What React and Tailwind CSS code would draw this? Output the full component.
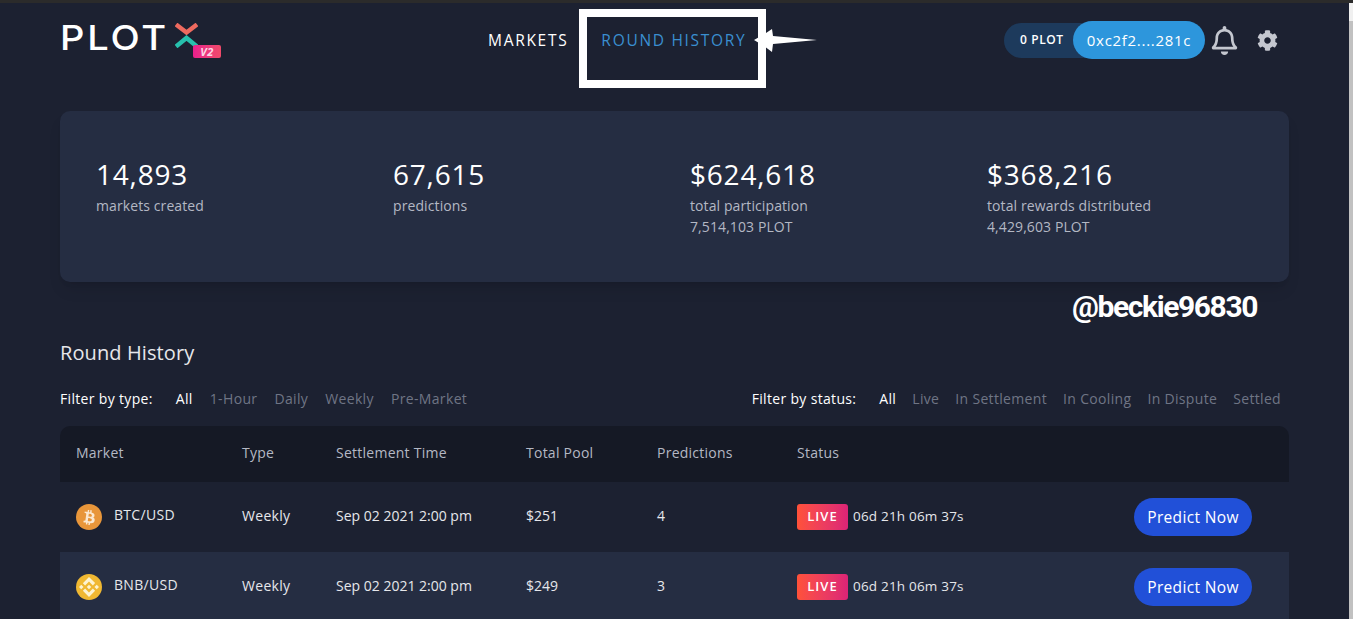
import { FaBtc, FaCog, FaRegBell } from 'react-icons/fa'
import { SiBinance } from 'react-icons/si'

const font = { fontFamily: '"Open Sans", sans-serif' }

const stats = [
  { value: '14,893', label: 'markets created' },
  { value: '67,615', label: 'predictions' },
  { value: '$624,618', label: 'total participation', sub: '7,514,103 PLOT' },
  { value: '$368,216', label: 'total rewards distributed', sub: '4,429,603 PLOT' },
]

const rows = [
  { market: 'BTC/USD', pool: '$251', count: 4, coin: 'btc' },
  { market: 'BNB/USD', pool: '$249', count: 3, coin: 'bnb' },
]

const gridCols = 'grid grid-cols-[166px_94px_190px_131px_140px_1fr] items-center'

function Logo() {
  return (
    <div className="relative flex h-[42px] w-[161px] items-start">
      <span className="origin-left scale-x-[1.12] text-[34px] leading-[32px] font-medium tracking-[2.5px] text-white" style={{ fontFamily: 'Inter, sans-serif' }}>PLOT</span>
      <svg viewBox="0 0 23 25" className="absolute top-[1px] left-[115px] h-[25px] w-[23px]" fill="none" strokeWidth="4.5">
        <path d="M1 1.5 L11.5 9.5 L22 1.5" stroke="#ee6a5f" />
        <path d="M1 23.5 L11.5 15 L22 23.5" stroke="#27c0ad" />
      </svg>
      <span className="absolute top-[23px] left-[133px] flex h-[13px] w-[28px] items-center justify-center rounded-[2px] bg-gradient-to-r from-[#e91e8c] to-[#f04a6a] text-[11px] leading-none font-bold tracking-[0.5px] text-[#fbd5e4] italic">V2</span>
    </div>
  )
}

function BtcIcon() {
  return (
    <span className="flex h-[26px] w-[26px] items-center justify-center rounded-full bg-[#e8963a]">
      <FaBtc size={15} color="#fbe8d0" className="rotate-[8deg]" />
    </span>
  )
}

function BnbIcon() {
  return (
    <span className="flex h-[26px] w-[26px] items-center justify-center rounded-full bg-[#f0b832]">
      <SiBinance size={20} color="#fdf3d0" />
    </span>
  )
}

export default function App() {
  return (
    <div className="relative flex h-[619px] w-full flex-col overflow-hidden bg-[#1c2131] text-white" style={font}>
      <div className="h-[3px] shrink-0 bg-[#2b2b2b]" />
      <div className="flex min-h-0 flex-1">
        <div className="min-w-0 flex-1">
          <header className="flex h-[108px] items-start px-[60px] pt-[18px]">
            <div className="pt-[1px]">
              <Logo />
            </div>
            <nav className="ml-[267px] flex gap-[33px] pt-[9px] text-[15.5px] leading-[20px] tracking-[1.7px]">
              <span className="text-white">MARKETS</span>
              <span className="text-[#3a8fd0]">ROUND HISTORY</span>
            </nav>
            <div className="ml-auto flex items-center pr-[11px]">
              <div className="flex h-[38px] items-center">
                <div className="flex h-[35px] w-[90px] items-center rounded-l-full bg-[#1d3a5c] pl-[16px] text-[12px] font-semibold tracking-[0.6px] whitespace-nowrap">0 PLOT</div>
                <div className="-ml-[21px] flex h-[38px] w-[132px] items-center justify-center rounded-full bg-[#2d96dc] text-[15px] tracking-[0.7px]">0xc2f2....281c</div>
              </div>
              <FaRegBell size={29} color="#c4c7cf" className="ml-[5px]" />
              <FaCog size={21} color="#c4c7cf" className="ml-[18px]" />
            </div>
          </header>

          <main className="px-[60px]">
            <section className="grid h-[171px] grid-cols-[repeat(4,297px)] rounded-[10px] bg-[#252d42] pt-[46px] pl-[36px] shadow-lg">
              {stats.map((s) => (
                <div key={s.label}>
                  <p className="text-[28px] leading-[34px] tracking-[0.8px] text-white">{s.value}</p>
                  <p className="mt-[4px] text-[14px] leading-[21px] tracking-[0.1px] text-[#b4b8c4]">{s.label}</p>
                  {s.sub && <p className="text-[14px] leading-[21px] tracking-[0.1px] text-[#b4b8c4]">{s.sub}</p>}
                </div>
              ))}
            </section>

            <h2 className="mt-[57px] text-[20px] leading-[27px] tracking-[0.1px] text-[#e6e7eb]">Round History</h2>

            <div className="mt-[22px] flex h-[20px] items-center justify-between text-[14px] tracking-[0.33px] whitespace-nowrap">
              <div className="flex items-center">
                <span className="mr-[23px] text-white">Filter by type:</span>
                <div className="flex gap-[17px] tracking-[0.35px] text-[#6f7585]">
                  <span className="text-white">All</span>
                  <span>1-Hour</span>
                  <span>Daily</span>
                  <span>Weekly</span>
                  <span>Pre-Market</span>
                </div>
              </div>
              <div className="flex items-center pr-[8px]">
                <span className="mr-[23px] text-white">Filter by status:</span>
                <div className="flex gap-[16px] text-[#6f7585]">
                  <span className="text-white">All</span>
                  <span>Live</span>
                  <span>In Settlement</span>
                  <span>In Cooling</span>
                  <span>In Dispute</span>
                  <span>Settled</span>
                </div>
              </div>
            </div>

            <div className="mt-[18px] overflow-hidden rounded-t-[10px] text-[14px]">
              <div className={`${gridCols} h-[56px] bg-[#151925] pb-[3px] pl-[16px] tracking-[0.25px] text-[#b4b8c4]`}>
                <span>Market</span>
                <span>Type</span>
                <span>Settlement Time</span>
                <span>Total Pool</span>
                <span>Predictions</span>
                <span>Status</span>
              </div>
              {rows.map((r, i) => (
                <div key={r.market} className={`${gridCols} h-[70px] pl-[16px] text-[#e6e7eb] ${i % 2 ? 'bg-[#252d42]' : 'bg-[#1c2131]'}`}>
                  <div className="flex items-center gap-[12px]">
                    {r.coin === 'btc' ? <BtcIcon /> : <BnbIcon />}
                    <span className="-mt-[5px] tracking-[0.3px]">{r.market}</span>
                  </div>
                  <span className="-mt-[4px] tracking-[0.3px]">Weekly</span>
                  <span className="-mt-[4px]">Sep 02 2021 2:00 pm</span>
                  <span className="-mt-[4px]">{r.pool}</span>
                  <span className="-mt-[4px]">{r.count}</span>
                  <div className="flex items-center justify-between pr-[37px]">
                    <div className="flex items-center gap-[5px]">
                      <span className="flex h-[26px] w-[51px] items-center justify-center rounded-[3px] bg-gradient-to-r from-[#ff5138] to-[#dc2376] text-[13px] font-semibold tracking-[1px] text-white">LIVE</span>
                      <span className="-mt-[2px] text-[13.5px] tracking-[0.2px]">06d 21h 06m 37s</span>
                    </div>
                    <button className="h-[38px] w-[118px] rounded-full bg-[#2150d8] pt-[1px] text-[15.5px] tracking-[0.35px] text-white">Predict Now</button>
                  </div>
                </div>
              ))}
            </div>
          </main>
        </div>

        <div className="flex w-[4px] shrink-0 flex-col">
          <div className="h-[18px] bg-[#f0f0f0]" />
          <div className="flex-1 bg-[#c1c1c1]" />
        </div>
      </div>

      {/* annotations drawn over the screenshot */}
      <div className="absolute top-[9px] left-[579px] h-[79px] w-[187px] border-[8px] border-white" />
      <svg viewBox="0 0 66 25" className="absolute top-[28px] left-[753px] h-[25px] w-[66px]">
        <path d="M1 12 L13 5 L19 1 L20 8 L64 12 L20 16 L19 24 L11 18 Z" fill="#fff" />
      </svg>
      <span className="absolute top-[288px] left-[1072px] text-[30px] leading-[38px] font-bold tracking-[-1.4px] text-white" style={{ fontFamily: 'Roboto, sans-serif' }}>@beckie96830</span>
    </div>
  )
}
